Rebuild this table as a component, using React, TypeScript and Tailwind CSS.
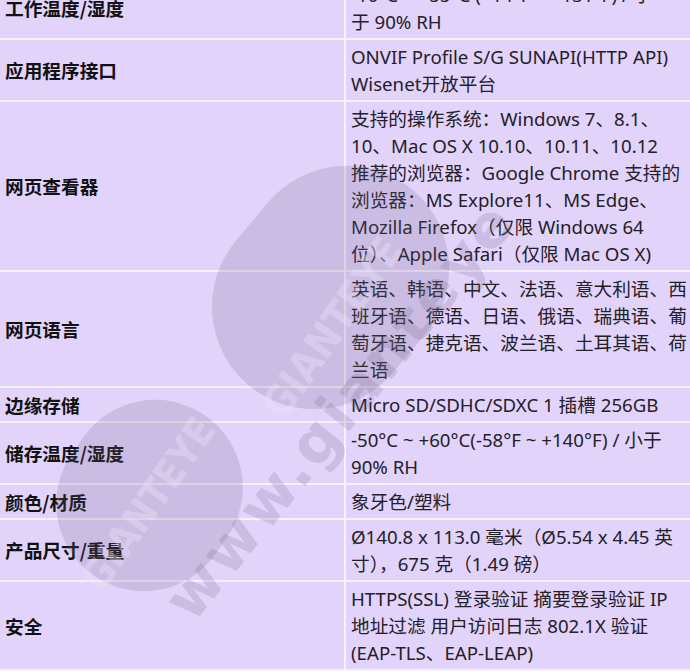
const rows: { label: string; lines: string[] }[] = [
  { label: "工作温度/湿度", lines: ["-10°C ~ +55°C (+14°F ~ +131°F) / 小", "于 90% RH"] },
  { label: "应用程序接口", lines: ["ONVIF Profile S/G SUNAPI(HTTP API)", "Wisenet开放平台"] },
  {
    label: "网页查看器",
    lines: [
      "支持的操作系统：Windows 7、8.1、",
      "10、Mac OS X 10.10、10.11、10.12",
      "推荐的浏览器：Google Chrome 支持的",
      "浏览器：MS Explore11、MS Edge、",
      "Mozilla Firefox（仅限 Windows 64",
      "位）、Apple Safari（仅限 Mac OS X)",
    ],
  },
  {
    label: "网页语言",
    lines: [
      "英语、韩语、中文、法语、意大利语、西",
      "班牙语、德语、日语、俄语、瑞典语、葡",
      "萄牙语、捷克语、波兰语、土耳其语、荷",
      "兰语",
    ],
  },
  { label: "边缘存储", lines: ["Micro SD/SDHC/SDXC 1 插槽 256GB"] },
  { label: "储存温度/湿度", lines: ["-50°C ~ +60°C(-58°F ~ +140°F) / 小于", "90% RH"] },
  { label: "颜色/材质", lines: ["象牙色/塑料"] },
  { label: "产品尺寸/重量", lines: ["Ø140.8 x 113.0 毫米（Ø5.54 x 4.45 英", "寸），675 克（1.49 磅）"] },
  {
    label: "安全",
    lines: ["HTTPS(SSL) 登录验证 摘要登录验证 IP", "地址过滤 用户访问日志 802.1X 验证", "(EAP-TLS、EAP-LEAP)"],
  },
];

function Watermark() {
  return (
    <div className="absolute inset-0 pointer-events-none overflow-hidden">
      {/* Logo blobs */}
      <div className="absolute left-[228px] top-[160px] w-[205px] h-[255px] rotate-[40deg] rounded-full bg-[#6e6480]/20" />
      <div className="absolute left-[222px] top-[296px] w-[220px] -rotate-[55deg] text-center text-[42px] font-black text-[#ece4fb]/40 [font-family:'Liberation_Sans_Narrow','DejaVu_Sans_Condensed',sans-serif]">
        GIANTEYE
      </div>
      <div className="absolute left-[62px] top-[398px] w-[175px] h-[195px] rotate-[35deg] rounded-full bg-[#6e6480]/20" />
      <div className="absolute left-[48px] top-[474px] w-[200px] -rotate-[55deg] text-center text-[40px] font-black text-[#ece4fb]/40 [font-family:'Liberation_Sans_Narrow','DejaVu_Sans_Condensed',sans-serif]">
        GIANTEYE
      </div>
      {/* Site address */}
      <div className="absolute left-[200px] top-[570px] origin-bottom-left -rotate-[51deg] text-[60px] leading-none font-black tracking-[3px] text-[#6e6480]/20 whitespace-nowrap [font-family:'DejaVu_Sans',sans-serif]">
        www.gianteye
      </div>
    </div>
  );
}

export default function App() {
  return (
    <div className="relative w-[690px] h-[671px] overflow-hidden bg-[#e1d3fa] text-[18.67px] [font-family:'Noto_Sans','Noto_Sans_CJK_SC',sans-serif]">
      <div className="-mt-[22px]">
        {rows.map((row) => (
          <div key={row.label} className="grid grid-cols-[346px_1fr] border-b-2 border-[#f6f1fe]">
            <div className="flex items-center border-r-2 border-[#f6f1fe] pl-[5px] font-bold text-[#111] [font-family:'Noto_Sans_CJK_SC',sans-serif]">
              {row.label}
            </div>
            <div className="py-[3px] pl-[5px] leading-[27px] text-[#242028] whitespace-nowrap">
              {row.lines.map((line, i) => (
                <div key={i}>{line}</div>
              ))}
            </div>
          </div>
        ))}
      </div>
      <Watermark />
    </div>
  );
}
